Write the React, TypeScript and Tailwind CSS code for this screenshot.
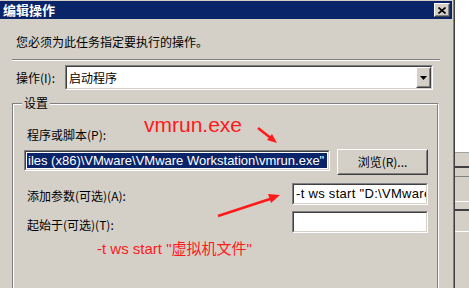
import React from "react";

const ui = { fontFamily: '"Noto Sans CJK SC", "Liberation Sans", sans-serif' };
const field = { fontFamily: '"Liberation Sans", "Noto Sans CJK SC", sans-serif' };
const anno = { fontFamily: '"Liberation Sans", "Noto Sans CJK SC", sans-serif' };

function Sunken({ className, children }: { className?: string; children?: React.ReactNode }) {
  return (
    <div className={`border border-t-[#808080] border-l-[#808080] border-b-white border-r-white ${className ?? ""}`}>
      <div className="h-full border border-t-[#404040] border-l-[#404040] border-b-[#d4d0c8] border-r-[#d4d0c8] bg-white overflow-hidden">
        {children}
      </div>
    </div>
  );
}

function Raised({ className, children }: { className?: string; children?: React.ReactNode }) {
  return (
    <div className={`border border-t-white border-l-white border-b-[#404040] border-r-[#404040] bg-[#d4d0c8] ${className ?? ""}`}>
      <div className="h-full border border-t-[#d4d0c8] border-l-[#d4d0c8] border-b-[#808080] border-r-[#808080] flex items-center justify-center">
        {children}
      </div>
    </div>
  );
}

export default function App() {
  return (
    <div className="w-[469px] h-[288px] overflow-hidden flex bg-[#d4d0c8] text-[12px] text-black" style={ui}>
      {/* Dialog */}
      <div className="w-[452px] h-[288px] flex flex-col">
        <div className="h-[1px] bg-[#d4d0c8]" />
        <div className="h-[18px] bg-[#0a246a] flex items-center pl-[3px] pr-[2px]">
          <span className="text-white font-bold text-[13px] leading-[18px]">编辑操作</span>
          <Raised className="ml-auto w-[16px] h-[14px]">
            <svg width="8" height="7" viewBox="0 0 8 7">
              <path d="M0.5 0.5 L7.5 6.5 M7.5 0.5 L0.5 6.5" stroke="black" strokeWidth="1.6" />
            </svg>
          </Raised>
        </div>

        <div className="pt-[15px] pl-[16px] h-[31px] leading-[16px]">您必须为此任务指定要执行的操作。</div>

        <div className="mt-[9px] ml-[12px] w-[428px] h-[2px] border-t border-t-[#808080] border-b border-b-white" />

        <div className="mt-[4px] flex items-center pl-[16px]">
          <span className="w-[49px] leading-[16px]">操作(I):</span>
          <Sunken className="w-[368px] h-[25px]">
            <div className="flex h-full">
              <span className="pl-[2px] leading-[21px]">启动程序</span>
              <Raised className="ml-auto w-[15px] h-[21px]">
                <svg width="7" height="4" viewBox="0 0 7 4">
                  <path d="M0 0 H7 L3.5 4 Z" fill="black" />
                </svg>
              </Raised>
            </div>
          </Sunken>
        </div>

        {/* Group box */}
        <div className="relative mt-[13px] ml-[12px] w-[427px] flex-1 border-t border-l border-r border-t-[#808080] border-l-[#808080] border-r-white">
          <div className="h-full border-t border-l border-r border-t-white border-l-white border-r-[#808080] pt-[8px]">
            <span className="absolute -top-[9px] left-[9px] px-[2px] bg-[#d4d0c8] leading-[16px]">设置</span>

            <div className="flex items-start pl-[13px]">
              <span className="w-[117px] mt-[14px] leading-[16px]">程序或脚本(P):</span>
              <span className="text-[21px] leading-[24px] text-[#ff1a1a]" style={anno}>vmrun.exe</span>
            </div>

            <div className="mt-[6px] flex items-start pl-[10px] gap-[7px]">
              <Sunken className="mt-[1px] w-[306px] h-[21px]">
                <div className="h-full p-[1px] whitespace-nowrap overflow-hidden">
                  <div className="h-full bg-[#0a246a] text-white text-[13px] leading-[15px] pl-[1px] whitespace-nowrap overflow-hidden" style={field}>
                    iles (x86)\VMware\VMware Workstation\vmrun.exe"
                  </div>
                </div>
              </Sunken>
              <Raised className="w-[91px] h-[26px]">
                <span className="leading-[16px]">浏览(R)...</span>
              </Raised>
            </div>

            <div className="mt-[8px] flex items-start pl-[13px]">
              <span className="w-[265px] mt-[5px] leading-[16px]">添加参数(可选)(A):</span>
              <Sunken className="w-[136px] h-[22px]">
                <div className="pl-[2px] text-[13px] leading-[18px] tracking-[0.3px] whitespace-nowrap overflow-hidden" style={field}>-t ws start "D:\VMware</div>
              </Sunken>
            </div>

            <div className="mt-[6px] flex items-start pl-[13px]">
              <span className="w-[265px] mt-[6px] leading-[16px]">起始于(可选)(T):</span>
              <Sunken className="w-[136px] h-[22px]" />
            </div>

            <div className="mt-[7px] pl-[83px] text-[15px] leading-[18px] text-[#ff1a1a]" style={anno}>
              -t ws start "虚拟机文件"
            </div>
          </div>

          <svg className="absolute left-0 top-0 pointer-events-none" width="427" height="190" viewBox="0 0 427 190">
            <line x1="245" y1="24" x2="259" y2="35" stroke="#ff1a1a" strokeWidth="2.5" />
            <path d="M264 39 L254 36 L259 30 Z" fill="#ff1a1a" />
            <line x1="205" y1="112" x2="257" y2="95" stroke="#ff1a1a" strokeWidth="2.5" />
            <path d="M267 91 L255 90 L258 99 Z" fill="#ff1a1a" />
          </svg>
        </div>
      </div>

      {/* Window frame */}
      <div className="w-[1px] h-full bg-[#d4d0c8]" />
      <div className="w-[1px] h-full bg-[#808080]" />
      <div className="w-[1px] h-full bg-[#404040]" />

      {/* Background window */}
      <div className="flex-1 h-full flex flex-col">
        <div className="h-[152px] bg-white" />
        <div className="h-[1px] bg-[#a0a0a0]" />
        <div className="h-[13px] bg-[#d4d0c8]" />
        <div className="h-[2px] bg-[#404040]" />
        <div className="h-[8px] bg-[#d4d0c8]" />
        <div className="h-[1px] bg-[#808080]" />
        <div className="h-[24px] bg-[#d4d0c8]" />
        <div className="h-[1px] bg-white" />
        <div className="h-[7px] bg-[#d4d0c8]" />
        <div className="h-[2px] bg-[#404040]" />
        <div className="h-[20px] bg-[#d4d0c8]" />
        <div className="h-[1px] bg-white" />
        <div className="flex-1 bg-[#d4d0c8]" />
      </div>
    </div>
  );
}
